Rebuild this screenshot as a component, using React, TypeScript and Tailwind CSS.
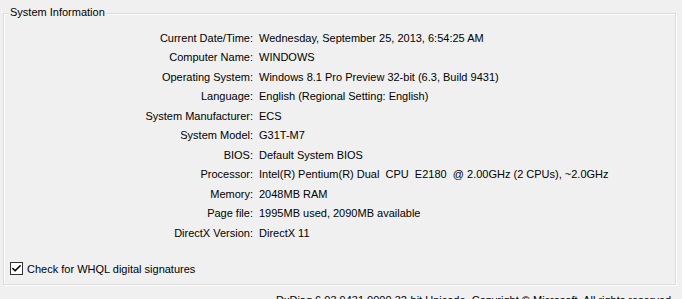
import { Check } from 'lucide-react'

const INFO: [string, string][] = [
  ['Current Date/Time:', 'Wednesday, September 25, 2013, 6:54:25 AM'],
  ['Computer Name:', 'WINDOWS'],
  ['Operating System:', 'Windows 8.1 Pro Preview 32-bit (6.3, Build 9431)'],
  ['Language:', 'English (Regional Setting: English)'],
  ['System Manufacturer:', 'ECS'],
  ['System Model:', 'G31T-M7'],
  ['BIOS:', 'Default System BIOS'],
  ['Processor:', 'Intel(R) Pentium(R) Dual  CPU  E2180  @ 2.00GHz (2 CPUs), ~2.0GHz'],
  ['Memory:', '2048MB RAM'],
  ['Page file:', '1995MB used, 2090MB available'],
  ['DirectX Version:', 'DirectX 11'],
]

export default function App() {
  return (
    <div
      className="h-[299px] w-[682px] overflow-hidden bg-[#f0f0f0] pl-[3px] pt-[13px] text-[11px] text-black"
      style={{ fontFamily: '"Liberation Sans", Arial, sans-serif' }}
    >
      <div className="relative h-[272px] w-[673px] border border-[#dcdcdc] shadow-[inset_1px_1px_0_#fff,1px_1px_0_#fff]">
        <span className="absolute -top-[8px] left-[5px] bg-[#f0f0f0] px-px leading-[13px]">
          System Information
        </span>

        <div className="grid auto-rows-[19.5px] grid-cols-[249px_1fr] items-center gap-x-[6px] pt-[14px] whitespace-pre">
          {INFO.map(([label, value]) => (
            <div key={label} className="contents">
              <div className="text-right">{label}</div>
              <div>{value}</div>
            </div>
          ))}
        </div>

        <label className="mt-[18px] ml-[6px] flex items-center gap-[4px]">
          <span className="flex h-[13px] w-[13px] items-center justify-center border border-[#333] bg-white">
            <Check size={11} strokeWidth={3.5} className="text-black" />
          </span>
          <span>Check for WHQL digital signatures</span>
        </label>
      </div>

      {/* version line sits mostly below the window edge, as in the original dialog */}
      <div className="mt-[9px] ml-[273px] whitespace-pre leading-[13px]">
        DxDiag 6.03.9431.0000 32-bit Unicode  Copyright © Microsoft. All rights reserved.
      </div>
    </div>
  )
}
